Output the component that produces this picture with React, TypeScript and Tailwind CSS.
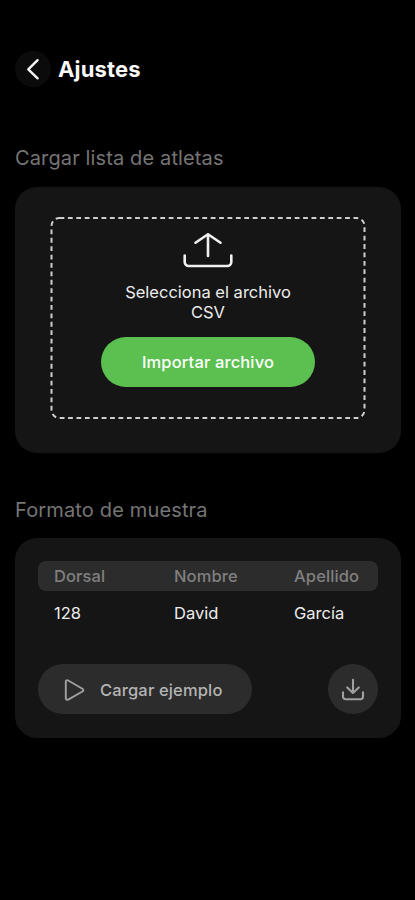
const columns = [
  { label: "Dorsal", value: "128" },
  { label: "Nombre", value: "David" },
  { label: "Apellido", value: "García" },
];

function BackIcon() {
  return (
    <svg className="h-9 w-9" viewBox="0 0 36 36" fill="none" stroke="#f4f4f4" strokeWidth="2.4" strokeLinecap="round" strokeLinejoin="round">
      <path d="M22.6 9.2 13.3 18.3l9.3 9" />
    </svg>
  );
}

function UploadIcon() {
  return (
    <svg className="h-9 w-[52px]" viewBox="0 0 52 36" fill="none" stroke="#f0f0f0" strokeWidth="2.6" strokeLinecap="round" strokeLinejoin="round">
      <path d="M26 24V2.2M13.5 10.7 26 2.2l12.5 8.5" />
      <path d="M2.7 23.5V30a4 4 0 0 0 4 4h38.6a4 4 0 0 0 4-4v-6.5" />
    </svg>
  );
}

function PlayIcon() {
  return (
    <svg className="h-6 w-6" viewBox="0 0 24 24" fill="none" stroke="#a0a0a0" strokeWidth="1.9" strokeLinejoin="round">
      <path d="M3.8 3.6v16.8c0 1.3 1.3 1.8 2.4 1.2l14.2-8.1c1.2-.7 1.2-2 0-2.7L6.2 2.5c-1.1-.6-2.4-.1-2.4 1.1Z" />
    </svg>
  );
}

function DownloadIcon() {
  return (
    <svg className="h-6 w-6" viewBox="0 0 24 24" fill="none" stroke="#a0a0a0" strokeWidth="2.1" strokeLinecap="round" strokeLinejoin="round">
      <path d="M12 2.9v12.6M6.2 10.4l5.8 5.6 5.8-5.6" />
      <path d="M2 15.4v4.2a2.6 2.6 0 0 0 2.6 2.6h14.8a2.6 2.6 0 0 0 2.6-2.6v-4.2" />
    </svg>
  );
}

export default function App() {
  return (
    <div className="h-[900px] w-full overflow-hidden bg-black px-[15px] pt-[51px] font-['Inter','Liberation_Sans',sans-serif]">
      <header className="flex h-9 items-center gap-[7px]">
        <button className="h-9 w-9 rounded-full bg-[#0b0b0b]" aria-label="Volver">
          <BackIcon />
        </button>
        <h1 className="text-[22px] leading-9 font-bold tracking-[0.15px] text-[#f8f8f8]">Ajustes</h1>
      </header>

      <section className="mt-[56px]">
        <h2 className="h-[44px] text-[20px] leading-[30px] tracking-[0.13px] text-[#757575]">Cargar lista de atletas</h2>
        <div className="h-[266px] w-[386px] rounded-[22px] bg-[#151515] px-[35px] pt-[30px]">
          <div className="relative flex h-[202px] flex-col items-center pt-[15px]">
            {/* Dashed drop zone outline */}
            <svg className="pointer-events-none absolute inset-0 h-full w-full" fill="none">
              <rect x="1.5" y="1" width="313" height="200" rx="8" stroke="#cfcfcf" strokeWidth="2" strokeDasharray="4.8 3.6" />
            </svg>
            <UploadIcon />
            <p className="mt-[14px] w-[180px] text-center text-[16.5px] leading-5 text-[#ededed]">Selecciona el archivo CSV</p>
            <button className="mt-[15px] h-[50px] w-[214px] rounded-full bg-[#5bc04f] text-[16.5px] font-medium tracking-[0.13px] text-white">
              Importar archivo
            </button>
          </div>
        </div>
      </section>

      <section className="mt-[42px]">
        <h2 className="h-[43px] text-[20px] leading-[30px] tracking-[0.15px] text-[#757575]">Formato de muestra</h2>
        <div className="h-[200px] w-[386px] rounded-[22px] bg-[#151515] px-[23px] pt-[23px]">
          <div className="grid h-[30px] grid-cols-[120px_120px_1fr] items-center rounded-lg bg-[#2c2c2c] pl-4 text-[16.5px] font-medium tracking-[0.12px] text-[#808080]">
            {columns.map((col) => (
              <span key={col.label}>{col.label}</span>
            ))}
          </div>
          <div className="grid h-[43px] grid-cols-[120px_120px_1fr] items-center pt-[2px] pl-4 text-[16.5px] text-[#ededed]">
            {columns.map((col) => (
              <span key={col.label}>{col.value}</span>
            ))}
          </div>
          <div className="mt-[30px] flex items-center justify-between">
            <button className="flex h-[50px] w-[214px] items-center gap-[14px] rounded-full bg-[#2c2c2c] pt-[2px] pl-6 text-[16.5px] font-medium tracking-[0.15px] text-[#b4b4b4]">
              <PlayIcon />
              Cargar ejemplo
            </button>
            <button className="flex h-[50px] w-[50px] items-center justify-center rounded-full bg-[#2c2c2c]" aria-label="Descargar">
              <DownloadIcon />
            </button>
          </div>
        </div>
      </section>
    </div>
  );
}
